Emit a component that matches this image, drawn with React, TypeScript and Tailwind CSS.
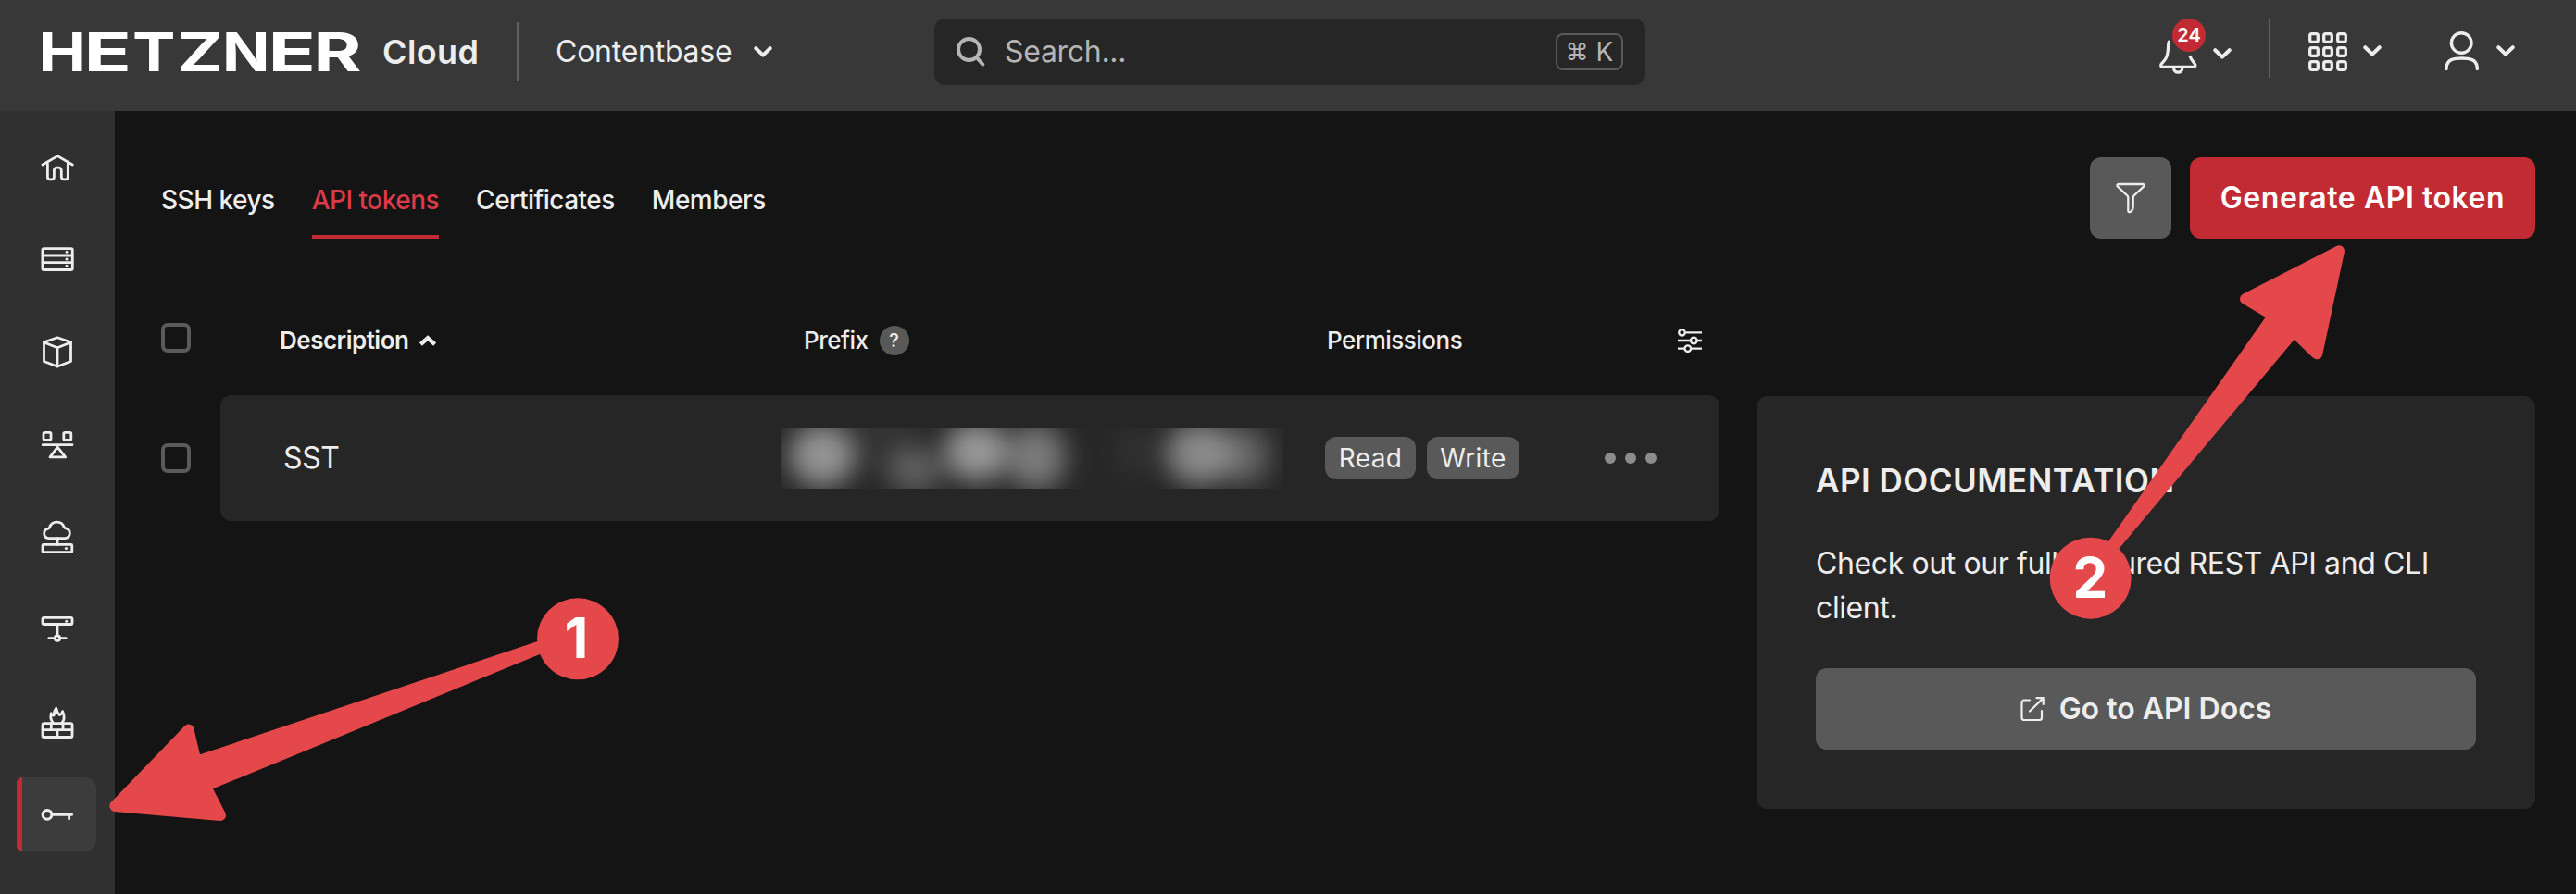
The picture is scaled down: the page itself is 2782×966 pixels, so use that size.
import React from "react";

type IconProps = { className?: string };

const ink = "#ededed";

function Chevron({ className = "", up = false, stroke = 4 }: IconProps & { up?: boolean; stroke?: number }) {
  return (
    <svg viewBox="0 0 20 14" fill="none" stroke={ink} strokeWidth={stroke} strokeLinecap={up ? "butt" : "round"} strokeLinejoin={up ? "miter" : "round"} className={"block shrink-0 " + className}>
      <path d={up ? "M1.5 11.5 10 4l8.500 7.500" : "M2.3 3.2 10 10.6l7.7-7.4"} />
    </svg>
  );
}

function Logo() {
  const letters: [string, number, number][] = [
    ["H", 41.5, 51.5],
    ["E", 90.5, 51.5],
    ["T", 143, 46.5],
    ["Z", 191.5, 49.5],
    ["N", 240, 51.5],
    ["E", 289.5, 51.5],
    ["R", 338.5, 52],
  ];
  return (
    <svg width="350" height="52" viewBox="42 30 350 52" className="block shrink-0 overflow-visible" aria-label="Hetzner">
      <text y="77" fill="#fff" fontFamily="Inter, sans-serif" fontWeight="700" fontSize="57.5">
        {letters.map(([ch, x, w], i) => (
          <tspan key={i} x={x} textLength={w} lengthAdjust="spacingAndGlyphs">
            {ch}
          </tspan>
        ))}
      </text>
    </svg>
  );
}

const sideIcons: { name: string; art: React.ReactNode }[] = [
  {
    name: "home",
    art: (
      <>
        <path d="M4 18 20.2 8.6 36.3 18" />
        <path d="M9.4 17v14.2a2.6 2.6 0 0 0 2.6 2.6h1.8a2.6 2.6 0 0 0 2.6-2.6v-7a3 3 0 0 1 3-3h1.9a3 3 0 0 1 3 3v7a2.6 2.6 0 0 0 2.6 2.6h1.8a2.6 2.6 0 0 0 2.6-2.6V17" />
      </>
    ),
  },
  {
    name: "servers",
    art: (
      <>
        <rect x="3.9" y="8.7" width="32.4" height="22.8" rx="1.5" />
        <path d="M4 16h32M4 23.7h32" />
        <path strokeWidth="3" d="M30 12.3h.01M30 20h.01M30 27.3h.01" />
      </>
    ),
  },
  {
    name: "volumes",
    art: (
      <>
        <path d="M20 4.8 34.5 9.8V30.5L20 36 5.5 30.5V9.8Z" />
        <path d="M5.5 10 20 15.7 34.5 10M20 15.7V36" />
      </>
    ),
  },
  {
    name: "load balancers",
    art: (
      <>
        <rect x="5" y="7.3" width="8" height="8" rx="1.2" />
        <rect x="26.8" y="7.3" width="8" height="8" rx="1.2" />
        <path d="M4.2 20.7h31.8M20.2 23.2 12 33.9h16.6Z" />
      </>
    ),
  },
  {
    name: "floating ips",
    art: (
      <>
        <path d="M10.5 21.6a5.2 5.2 0 0 1-1-10.2c1.2-.4 1.8-.6 2.1-1.6a8.3 8.3 0 0 1 15.6-.4c.4 1 .8 1.2 1.9 1.4a5.5 5.5 0 0 1-.6 10.8Z" />
        <path d="M20 21.6v7" />
        <rect x="4" y="28.4" width="31.8" height="8.3" rx="1" />
        <path strokeWidth="3.2" d="M29.4 32.5h.01" />
      </>
    ),
  },
  {
    name: "networks",
    art: (
      <>
        <rect x="4" y="7.3" width="32" height="7.2" rx="1.5" />
        <path strokeWidth="3" d="M29.7 11.2h.01" />
        <path d="M20 14.6v12M10.8 29.7h6M23.2 29.7h6" />
        <circle cx="20" cy="29.7" r="2.7" />
      </>
    ),
  },
  {
    name: "firewalls",
    art: (
      <>
        <rect x="4" y="21.7" width="32" height="14.8" rx="1.5" />
        <path d="M4 28.7h32M13.3 21.7v7M26 21.7v7M20 28.7v7.5" />
        <path d="M15.2 20.8c-2.6-3-2.8-6.600-1.900-10 .8 1.800 1.600 2.600 2.900 2.200 0-3.600.8-5.800 2.600-7.800.4 3.600 1.600 5.600 3.400 7.400 1.600-.4 2.800-1.800 3.400-4 1.900 4.400 2.900 8.600-.6 12.200" />
      </>
    ),
  },
  {
    name: "security",
    art: (
      <>
        <circle cx="9" cy="20.3" r="4.9" strokeWidth="3" />
        <path d="M14.2 20.3h21.5M32.6 20.5v4.4" />
      </>
    ),
  },
];

function Sidebar() {
  return (
    <nav className="flex w-[124px] shrink-0 flex-col gap-5 bg-[#303030] pt-5 pl-[18px]">
      {sideIcons.map(({ name, art }) => {
        const active = name === "security";
        return (
          <a
            key={name}
            aria-label={name}
            className={
              "flex h-20 w-[86px] shrink-0 items-center overflow-hidden rounded-r-xl rounded-l-[6px] " + (active ? "bg-[#3c3c3c]" : "")
            }
          >
            <span className={"h-20 w-1.5 " + (active ? "bg-[#c22b34]" : "")} />
            <svg width="40" height="40" viewBox="0 0 40 40" fill="none" stroke={ink} strokeWidth="2.8" strokeLinecap="round" strokeLinejoin="round" className="ml-[18px] block">
              {art}
            </svg>
          </a>
        );
      })}
    </nav>
  );
}

function Header() {
  return (
    <header className="flex h-[120px] shrink-0 items-start bg-[#383838]">
      <div className="flex h-[112px] w-[558px] shrink-0 items-center pl-[42px]">
        <Logo />
        <span className="ml-[21px] text-[36px] leading-[44px] font-semibold tracking-[0.4px] text-[#ededed]">Cloud</span>
      </div>
      <div className="flex h-[112px] w-[451px] shrink-0 items-center">
        <span className="h-16 w-0.5 bg-[#606060]" />
        <span className="ml-10 text-[32px] leading-10 tracking-[-0.25px]">Contentbase</span>
        <Chevron className="ml-6 h-3.5 w-5" />
      </div>
      <div className="mt-5 flex h-[72px] w-[768px] shrink-0 items-center rounded-xl bg-[#262626] text-[#b5b5b5]">
        <svg width="32" height="32" viewBox="0 0 32 32" fill="none" stroke="#b5b5b5" strokeWidth="4" strokeLinecap="round" className="ml-6 block">
          <circle cx="13.5" cy="13.500" r="11.500" />
          <path d="m22 22.500 6.300 7" />
        </svg>
        <span className="ml-5 flex-1 text-[32px] leading-10 tracking-[-0.3px]">Search...</span>
        <kbd className="mr-6 flex h-10 w-[73px] items-center justify-center gap-2 rounded-lg border-2 border-[#5a5a5a] font-[Inter,sans-serif] text-[28px] leading-9">
          <span className="text-[25px]">⌘</span>
          <span>K</span>
        </kbd>
      </div>
      <div className="ml-[554px] flex items-start">
        <div className="relative mt-5 h-16 w-[50px]">
          <svg width="42" height="64" viewBox="2331 20 42 64" fill="none" stroke={ink} strokeWidth="3.2" strokeLinecap="round" strokeLinejoin="round" className="block">
            <path d="M2342.3 45.2C2340.5 49 2343 57 2338.5 64c-2 3-4.800 4.600-4.800 6.600 0 1.200.8 1.800 2 1.800h33.200c1.200 0 2-.6 2-1.800 0-2-3.600-4-5.600-9.200" />
            <path d="M2347.5 73c0 3.200 2 5.200 4.700 5.200s4.700-2 4.700-5.200" />
          </svg>
          <span className="absolute top-0 left-[15px] flex h-9 w-9 items-center justify-center rounded-full bg-[#c22b34] text-[20px] leading-none font-semibold text-white">
            24
          </span>
        </div>
        <Chevron className="mt-[51px] ml-[9px] h-3.5 w-5" />
        <span className="mt-5 ml-10 h-16 w-0.5 bg-[#606060]" />
        <svg width="42" height="42" viewBox="0 0 42 42" fill="none" stroke={ink} strokeWidth="3.3" className="mt-[35px] ml-[41px] block">
          {[0, 15, 30].map((y) => [0, 15, 30].map((x) => <rect key={x + "-" + y} x={x + 1.7} y={y + 1.7} width="8.600" height="8.600" rx="2" />))}
        </svg>
        <Chevron className="mt-12 ml-[17px] h-3.5 w-5" />
        <svg width="38" height="44" viewBox="0 0 38 44" fill="none" stroke={ink} strokeWidth="3.4" strokeLinecap="round" className="mt-[33px] ml-[68px] block">
          <circle cx="18.2" cy="13.500" r="10.800" />
          <path d="M2 41.5C2 34.500 6 31 12 30.400q7-.7 13 0C31 31 35.300 34.500 35.300 41.500" />
        </svg>
        <Chevron className="mt-12 ml-[18px] h-3.5 w-5" />
      </div>
    </header>
  );
}

function Checkbox({ className = "" }: IconProps) {
  return <span className={"h-8 w-8 shrink-0 rounded-[7px] border-4 border-[#5a5a5a] " + className} />;
}

function Tabs() {
  const tab = "h-full border-b-4 pt-7 text-[28px] leading-9 font-medium tracking-[-0.5px] ";
  return (
    <div className="flex h-[88px] gap-10">
      <a className={tab + "border-transparent"}>SSH keys</a>
      <a className={tab + "border-[#c22b34] text-[#dc3a48]"}>API tokens</a>
      <a className={tab + "border-transparent"}>Certificates</a>
      <a className={tab + "border-transparent"}>Members</a>
    </div>
  );
}

function RedactedPrefix() {
  const blobs = [
    { cx: 45, cy: 30, rx: 36, ry: 34, o: 0.6 },
    { cx: 145, cy: 46, rx: 30, ry: 26, o: 0.3 },
    { cx: 212, cy: 26, rx: 36, ry: 32, o: 0.62 },
    { cx: 276, cy: 32, rx: 32, ry: 36, o: 0.46 },
    { cx: 385, cy: 26, rx: 24, ry: 22, o: 0.06 },
    { cx: 452, cy: 28, rx: 36, ry: 34, o: 0.54 },
    { cx: 500, cy: 30, rx: 28, ry: 32, o: 0.34 },
    { cx: 110, cy: 10, rx: 40, ry: 40, o: 0.06 },
  ];
  return (
    <svg width="543" height="66" viewBox="0 0 543 66" className="block overflow-hidden">
      <defs>
        <filter id="soft" x="-80%" y="-80%" width="260%" height="260%">
          <feGaussianBlur stdDeviation="14" />
        </filter>
      </defs>
      <rect width="543" height="66" fill="#272727" />
      {blobs.map((b, i) => (
        <ellipse key={i} cx={b.cx} cy={b.cy} rx={b.rx} ry={b.ry} fill="#dcdcdc" opacity={b.o} filter="url(#soft)" />
      ))}
    </svg>
  );
}

function TokenTable() {
  return (
    <section className="w-[1683px] shrink-0">
      <div className="flex h-[78px] items-start">
        <Checkbox />
        <div className="mt-[3px] ml-24 flex h-8 w-[566px] items-center">
          <span className="text-[26px] leading-8 font-semibold tracking-[-0.5px]">Description</span>
          <Chevron up stroke={5} className="ml-3 h-3.5 w-[18px]" />
        </div>
        <div className="mt-[3px] flex h-8 w-[565px] items-center">
          <span className="text-[26px] leading-8 font-medium tracking-[-0.5px]">Prefix</span>
          <span className="ml-3 flex h-8 w-8 items-center justify-center rounded-full bg-[#595959] text-[20px] leading-none font-medium">?</span>
        </div>
        <span className="mt-[3px] w-[379px] text-[26px] leading-8 font-medium tracking-[-0.5px]">Permissions</span>
        <svg width="26" height="26" viewBox="0 0 26 26" fill="none" stroke={ink} strokeWidth="2.3" className="mt-1.5 block">
          <path d="M8.5 4.300H26M0 13h13.500M21 13h5M0 21.700h7M14.500 21.700H26" />
          <circle cx="4.5" cy="4.300" r="3.300" />
          <circle cx="17.3" cy="13" r="3.300" />
          <circle cx="10.8" cy="21.700" r="3.300" />
        </svg>
      </div>
      <div className="flex items-center">
        <Checkbox />
        <div className="ml-8 flex h-[136px] w-[1619px] items-center rounded-xl bg-[#262626]">
          <span className="w-[605px] pl-[68px] text-[32px] leading-10 tracking-[-0.4px]">SST</span>
          <RedactedPrefix />
          <div className="ml-[45px] flex w-[302px] gap-3 text-[28px] leading-none tracking-[0.4px]">
            <span className="flex h-[46px] w-[98px] items-center justify-center rounded-xl bg-[#595959]">Read</span>
            <span className="flex h-[46px] w-[100px] items-center justify-center rounded-xl bg-[#595959]">Write</span>
          </div>
          <div className="flex gap-2.5">
            <span className="h-3 w-3 rounded-full bg-[#8c8c8c]" />
            <span className="h-3 w-3 rounded-full bg-[#8c8c8c]" />
            <span className="h-3 w-3 rounded-full bg-[#8c8c8c]" />
          </div>
        </div>
      </div>
    </section>
  );
}

function DocsCard() {
  return (
    <aside className="mt-[79px] ml-10 h-[446px] w-[841px] shrink-0 rounded-xl bg-[#262626] px-16 pt-[67px]">
      <h2 className="text-[35px] leading-12 font-semibold tracking-[0.5px] whitespace-nowrap">API DOCUMENTATION</h2>
      <p className="mt-[42px] text-[32px] leading-12 tracking-[-0.4px]">Check out our full featured REST API and CLI client.</p>
      <a className="mt-[41px] flex h-[88px] w-full items-center justify-center gap-4 rounded-xl bg-[#595959] text-[32px] leading-10 font-semibold">
        <svg width="26" height="26" viewBox="0 0 26 26" fill="none" stroke={ink} strokeWidth="2.2" strokeLinecap="round" strokeLinejoin="round" className="block">
          <path d="M10 3.5H4A2.500 2.500 0 0 0 1.500 6v16.500A2.500 2.500 0 0 0 4 25h16.500a2.500 2.500 0 0 0 2.500-2.500V15" />
          <path d="M17.5 1.200h7.200V8M24.500 1.400 10 15.500" />
        </svg>
        <span>Go to API Docs</span>
      </a>
    </aside>
  );
}

function Annotations() {
  return (
    <svg width="2782" height="966" viewBox="0 0 2782 966" className="pointer-events-none absolute top-0 left-0" fill="#e5484b" fontFamily="Inter, sans-serif" fontWeight="700" fontSize="60" textAnchor="middle">
      <path d="M124.3 870.700 203.700 788.500 209.400 787.500 216 815.300 600 686.500V700L230 852.300 243.300 878.300 238 881Z" />
      <path d="M203.7 788.600 124.300 870.900 238 881" fill="none" stroke="#e5484b" strokeWidth="12" strokeLinecap="round" strokeLinejoin="round" />
      <circle cx="624" cy="690.3" r="44" />
      <text x="622.5" y="711" fill="#fff">1</text>
      <path d="M2526 271.300 2425 323 2422.300 328.300 2446.700 342.700 2270 595 2280 603 2477.700 367 2497.800 386.500 2502.300 382.300Z" />
      <path d="M2425 323 2526 271.300 2502.300 382.300" fill="none" stroke="#e5484b" strokeWidth="12" strokeLinecap="round" strokeLinejoin="round" />
      <circle cx="2257.7" cy="624.7" r="44" />
      <text x="2257.3" y="646" fill="#fff">2</text>
    </svg>
  );
}

export default function App() {
  return (
    <div className="relative flex h-[966px] w-[2782px] flex-col overflow-hidden bg-[#141414] font-[Inter,sans-serif] text-[#ededed]">
      <Header />
      <div className="flex flex-1">
        <Sidebar />
        <main className="flex-1 pt-[50px] pl-[50px]">
          <div className="flex w-[2564px] justify-between">
            <Tabs />
            <div className="flex gap-5">
              <button className="flex h-[88px] w-[88px] items-center justify-center rounded-xl bg-[#595959]" aria-label="Filter">
                <svg width="32" height="34" viewBox="0 0 32 34" fill="none" stroke={ink} strokeWidth="2.3" strokeLinejoin="round" className="block">
                  <path d="M3 2h26c1.6 0 2 1.600 1 2.600L19.500 14.500c-.8.8-.8 1.200-.8 2.200v9.500c0 3-2.200 6-3.800 6s-1.600-1-1.600-2.200V16.700c0-1 0-1.400-.8-2.200L2 4.600C1 3.600 1.400 2 3 2Z" />
                </svg>
              </button>
              <button className="flex h-[88px] w-[373px] items-center justify-center rounded-xl bg-[#c22b34] text-[32px] leading-10 font-semibold tracking-[0.55px] whitespace-nowrap text-white">
                Generate API token
              </button>
            </div>
          </div>
          <div className="mt-[91px] flex items-start">
            <TokenTable />
            <DocsCard />
          </div>
        </main>
      </div>
      <Annotations />
    </div>
  );
}
